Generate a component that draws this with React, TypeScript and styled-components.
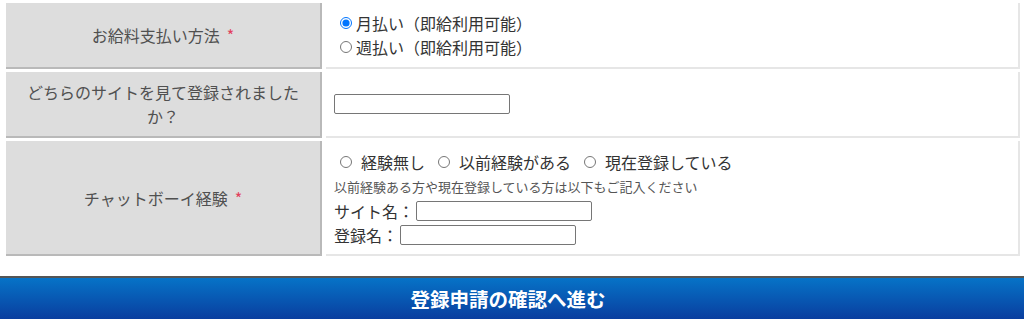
import React from 'react';
import styled, { createGlobalStyle } from 'styled-components';

const GlobalStyle = createGlobalStyle`
  body {
    margin: 0;
    background: #fff;
    font-family: "Noto Sans CJK JP", "Noto Sans", sans-serif;
    color: #333;
  }
`;

const Page = styled.div`
  display: flex;
  flex-direction: column;
  padding-top: 3px;
`;

const FormTable = styled.div`
  display: grid;
  grid-template-columns: 316px 1fr;
  column-gap: 4px;
  row-gap: 3px;
  padding: 0 4px 0 6px;
`;

const HeadCell = styled.div<{ h: number }>`
  box-sizing: border-box;
  height: ${(p) => p.h}px;
  background: #dddddd;
  border-right: 2px solid #b9b9b9;
  border-bottom: 2px solid #b9b9b9;
  padding: 0 20px;
  display: flex;
  align-items: center;
  justify-content: center;
  text-align: center;
  font-size: 16px;
  line-height: 24px;
  color: #505050;
`;

const Required = styled.span`
  color: #e2405a;
  margin-left: 7px;
`;

const DataCell = styled.div`
  box-sizing: border-box;
  background: #fff;
  border-right: 2px solid #e6e6e6;
  border-bottom: 2px solid #e6e6e6;
  padding: 0 8px;
  display: flex;
  flex-direction: column;
  justify-content: center;
  font-size: 16px;
  line-height: 24px;
  color: #333;
`;

const RadioLine = styled.label`
  display: flex;
  align-items: center;
`;

const Radio = styled.input<{ gap?: number }>`
  width: 12px;
  height: 12px;
  margin: 0 ${(p) => p.gap ?? 4}px 0 6px;
`;

const InlineRadios = styled.div`
  display: flex;
  align-items: center;
  line-height: 26px;
`;

const InlineOption = styled.label`
  display: flex;
  align-items: center;
  margin-right: 7px;
`;

const Note = styled.div`
  font-size: 13px;
  line-height: 24px;
  color: #555;
`;

const FieldLine = styled.label`
  display: flex;
  align-items: center;
  line-height: 24px;
`;

const TextBox = styled.input<{ offset?: number }>`
  box-sizing: border-box;
  width: 176px;
  height: 20px;
  border: 1px solid #767676;
  border-radius: 2px;
  padding: 0 4px;
  margin: 0 0 0 ${(p) => p.offset ?? 0}px;
`;

const Submit = styled.button`
  margin-top: 20px;
  width: 100%;
  height: 46px;
  border: none;
  border-top: 2px solid #555;
  background: linear-gradient(#0673c7, #0a3a9c);
  color: #fff;
  font-family: "Noto Sans CJK JP", sans-serif;
  font-weight: 700;
  font-size: 19.5px;
  padding: 0 8px 4px 0;
  cursor: pointer;
`;

export default function App() {
  return (
    <Page>
      <GlobalStyle />
      <FormTable>
        <HeadCell h={66}>
          お給料支払い方法<Required>*</Required>
        </HeadCell>
        <DataCell>
          <RadioLine>
            <Radio type="radio" name="pay" defaultChecked />
            月払い（即給利用可能）
          </RadioLine>
          <RadioLine>
            <Radio type="radio" name="pay" />
            週払い（即給利用可能）
          </RadioLine>
        </DataCell>

        <HeadCell h={66}>どちらのサイトを見て登録されましたか？</HeadCell>
        <DataCell>
          <FieldLine>
            <TextBox type="text" />
          </FieldLine>
        </DataCell>

        <HeadCell h={115}>
          チャットボーイ経験<Required>*</Required>
        </HeadCell>
        <DataCell>
          <InlineRadios>
            <InlineOption>
              <Radio type="radio" name="exp" gap={9} />
              経験無し
            </InlineOption>
            <InlineOption>
              <Radio type="radio" name="exp" gap={9} />
              以前経験がある
            </InlineOption>
            <InlineOption>
              <Radio type="radio" name="exp" gap={9} />
              現在登録している
            </InlineOption>
          </InlineRadios>
          <Note>以前経験ある方や現在登録している方は以下もご記入ください</Note>
          <FieldLine>
            サイト名：
            <TextBox type="text" offset={2} />
          </FieldLine>
          <FieldLine>
            登録名：
            <TextBox type="text" offset={2} />
          </FieldLine>
        </DataCell>
      </FormTable>
      <Submit type="button">登録申請の確認へ進む</Submit>
    </Page>
  );
}
